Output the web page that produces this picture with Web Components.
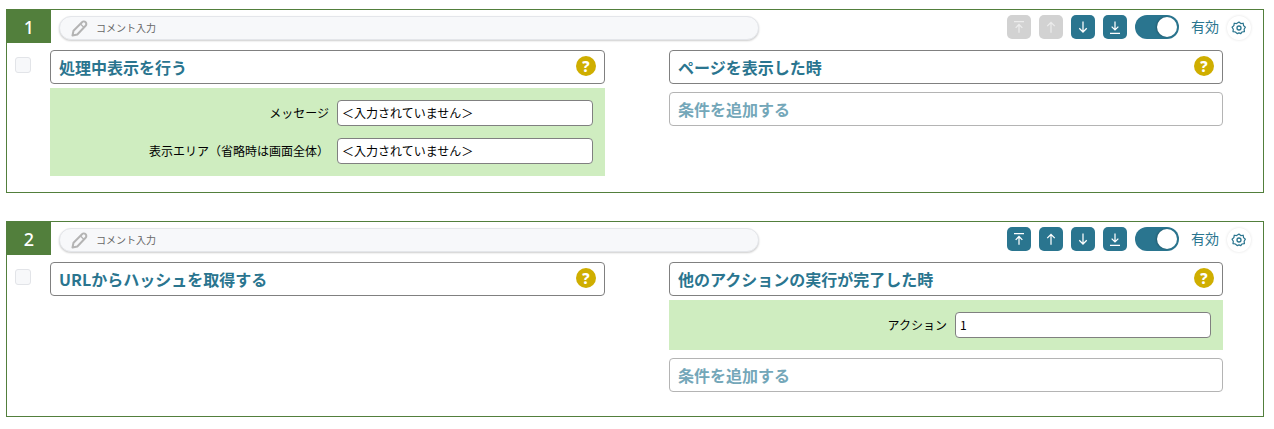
<!DOCTYPE html>
<html lang="ja">
<head>
<meta charset="utf-8">
<title>アクション</title>
<style>
    html, body {
        margin: 0;
        background: #fff;
    }

    body {
        padding: 9px 10px 0 6px;
        font-family: "Noto Sans CJK JP", "Noto Sans", sans-serif;
    }
</style>
</head>
<body>

<action-card no="1" first-disabled>
    <title-box slot="left" help>処理中表示を行う</title-box>
    <param-panel slot="left">
        <param-row label="メッセージ" value="＜入力されていません＞"></param-row>
        <param-row label="表示エリア（省略時は画面全体）" value="＜入力されていません＞"></param-row>
    </param-panel>
    <title-box slot="right" help>ページを表示した時</title-box>
    <title-box slot="right" add>条件を追加する</title-box>
</action-card>

<action-card no="2" style="margin-top:28px">
    <title-box slot="left" help>URLからハッシュを取得する</title-box>
    <title-box slot="right" help>他のアクションの実行が完了した時</title-box>
    <param-panel slot="right">
        <param-row label="アクション" value="1"></param-row>
    </param-panel>
    <title-box slot="right" add>条件を追加する</title-box>
</action-card>

<script>
const ICONS = {
    top: '<path d="M6 5.500h12M12 19V9.500M8 13l4-4 4 4"/>',
    up: '<path d="M12 19V6.500M7.500 11L12 6.500l4.500 4.500"/>',
    down: '<path d="M12 5.500V18M7.500 13.500L12 18l4.500-4.500"/>',
    bottom: '<path d="M12 5.500V15M8 11.500l4 4 4-4M6 19.500h12"/>'
};

class MoveButton extends HTMLElement {
    connectedCallback() {
        let icon = ICONS[this.getAttribute('icon')];
        this.attachShadow({mode: 'open'}).innerHTML = `
<style>
    :host {
        display: flex;
        align-items: center;
        justify-content: center;
        width: 24px;
        height: 24px;
        border-radius: 5px;
        background: #2a758f;
    }

    :host([disabled]) {
        background: #d2d2d2;
    }

    svg {
        width: 20px;
        height: 20px;
        fill: none;
        stroke: #fff;
        stroke-width: 1.500;
    }

    :host([disabled]) svg {
        stroke: #ececec;
    }
</style>
<svg viewBox="0 0 24 24">${icon}</svg>
        `;
    }
}
customElements.define('move-button', MoveButton);

class OnToggle extends HTMLElement {
    connectedCallback() {
        this.attachShadow({mode: 'open'}).innerHTML = `
<style>
    :host {
        display: flex;
        justify-content: flex-end;
        align-items: center;
        box-sizing: border-box;
        width: 44px;
        height: 24px;
        padding-right: 2px;
        border-radius: 12px;
        background: #2a758f;
    }

    i {
        width: 20px;
        height: 20px;
        border-radius: 50%;
        background: #fff;
        box-shadow: -1px 0 2px rgba(0, 0, 0, .25);
    }
</style>
<i></i>
        `;
    }
}
customElements.define('on-toggle', OnToggle);

class GearButton extends HTMLElement {
    connectedCallback() {
        this.attachShadow({mode: 'open'}).innerHTML = `
<style>
    :host {
        display: flex;
        align-items: center;
        justify-content: center;
        width: 24px;
        height: 24px;
        margin-top: 2px;
        border-radius: 50%;
        background: #fff;
        box-shadow: 0 0 3px rgba(0, 0, 0, .12);
    }

    svg {
        width: 16px;
        height: 16px;
        fill: none;
        stroke: #2a758f;
        stroke-width: 1.300;
    }
</style>
<svg viewBox="0 0 16 16">
    <circle cx="8" cy="8" r="2"/>
    <path d="M8 1.800l1.900 1.600 2.500-.3.400 2.500 1.900 1.700-1.300 2.100.3 2.500-2.500.4L9.900 14 8 13.200 6.100 14l-1.900-1.700-2.500-.4.300-2.500L.7 7.300l1.900-1.700.4-2.500 2.500.3z" transform="translate(.4 .3) scale(.95)" stroke-linejoin="round"/>
</svg>
        `;
    }
}
customElements.define('gear-button', GearButton);

class CommentPill extends HTMLElement {
    connectedCallback() {
        this.attachShadow({mode: 'open'}).innerHTML = `
<style>
    :host {
        display: flex;
        align-items: center;
        box-sizing: border-box;
        width: 700px;
        height: 24px;
        margin-top: 6px;
        padding-left: 11px;
        border: 1px solid #e4e6ea;
        border-radius: 12px;
        background: #f7f8fa;
        box-shadow: 0 1px 2px rgba(0, 0, 0, .2);
        color: #666;
        font-size: 10px;
    }

    span {
        margin-top: -1px;
    }

    svg {
        width: 17px;
        height: 17px;
        margin-right: 8px;
        fill: none;
        stroke: #b4b4b4;
        stroke-width: 2;
        stroke-linejoin: round;
    }
</style>
<svg viewBox="0 0 17 17">
    <path d="M1.500 15.500l1-4.800L11 2.200c1-1 2.700-.9 3.600 0s1 2.600 0 3.600L6.300 14.500z"/>
    <path d="M9.500 4l3.500 3.500" stroke-width="1.200"/>
</svg>
<span>コメント入力</span>
        `;
    }
}
customElements.define('comment-pill', CommentPill);

class TitleBox extends HTMLElement {
    connectedCallback() {
        this.attachShadow({mode: 'open'}).innerHTML = `
<style>
    :host {
        display: flex;
        align-items: center;
        justify-content: space-between;
        box-sizing: border-box;
        height: 34px;
        padding: 0 8px;
        border: 1px solid #808080;
        border-radius: 4px;
        background: #fff;
        color: #2a758f;
        font-size: 16px;
        font-weight: 700;
    }

    :host([add]) {
        margin: 4px 0 8px;
        border-color: #b4b4b4;
        color: #74a7b9;
    }

    b {
        display: none;
        width: 20px;
        height: 20px;
        margin: -3px 0 0;
        border-radius: 50%;
        background: #cfae00;
        color: #fff;
        font: 800 15px/20px "Noto Sans", sans-serif;
        text-align: center;
    }

    :host([help]) b {
        display: block;
    }
</style>
<span><slot></slot></span>
<b>?</b>
        `;
    }
}
customElements.define('title-box', TitleBox);

class ParamPanel extends HTMLElement {
    connectedCallback() {
        this.attachShadow({mode: 'open'}).innerHTML = `
<style>
    :host {
        display: flex;
        flex-direction: column;
        gap: 12px;
        padding: 12px;
        background: #cfedc0;
    }
</style>
<slot></slot>
        `;
    }
}
customElements.define('param-panel', ParamPanel);

class ParamRow extends HTMLElement {
    connectedCallback() {
        this.attachShadow({mode: 'open'}).innerHTML = `
<style>
    :host {
        display: flex;
        align-items: center;
        justify-content: flex-end;
        gap: 8px;
        color: #000;
        font-size: 12px;
    }

    span {
        margin-top: -2px;
    }

    div {
        box-sizing: border-box;
        width: 256px;
        height: 26px;
        padding-left: 4px;
        border: 1px solid #808080;
        border-radius: 4px;
        background: #fff;
        font-size: 12px;
        line-height: 24px;
    }
</style>
<span></span>
<div></div>
        `;
        this.shadowRoot.querySelector('span').textContent = this.getAttribute('label');
        this.shadowRoot.querySelector('div').textContent = this.getAttribute('value');
    }
}
customElements.define('param-row', ParamRow);

class ActionCard extends HTMLElement {
    connectedCallback() {
        let off = this.hasAttribute('first-disabled') ? 'disabled' : '';
        this.attachShadow({mode: 'open'}).innerHTML = `
<style>
    :host {
        display: block;
        box-sizing: border-box;
        border: 1px solid #527f3c;
        padding-bottom: 16px;
    }

    header {
        display: flex;
        align-items: flex-start;
        height: 33px;
    }

    .no {
        align-self: stretch;
        width: 44px;
        margin-right: 8px;
        background: #527f3c;
        color: #fff;
        font: 500 18px/35px "Noto Sans", sans-serif;
        text-align: center;
    }

    .tools {
        display: flex;
        align-items: center;
        gap: 8px;
        margin: 4px 12px 0 auto;
    }

    .label {
        margin: -3px 0 0 4px;
        color: #2a758f;
        font-size: 14px;
        line-height: 24px;
    }

    .body {
        display: flex;
        margin-top: 7px;
    }

    .check {
        box-sizing: border-box;
        width: 16px;
        height: 16px;
        margin: 7px 0 0 8px;
        border: 1px solid #e2e4e8;
        border-radius: 3px;
        background: #f7f8fa;
    }

    .col {
        display: flex;
        flex-direction: column;
        gap: 4px;
    }

    .left {
        width: 555px;
        margin-left: 19px;
    }

    .right {
        width: 554px;
        margin-left: 64px;
    }
</style>
<header>
    <div class="no">${this.getAttribute('no')}</div>
    <comment-pill></comment-pill>
    <div class="tools">
        <move-button icon="top" ${off}></move-button>
        <move-button icon="up" ${off}></move-button>
        <move-button icon="down"></move-button>
        <move-button icon="bottom"></move-button>
        <on-toggle></on-toggle>
        <span class="label">有効</span>
        <gear-button></gear-button>
    </div>
</header>
<div class="body">
    <div class="check"></div>
    <div class="col left"><slot name="left"></slot></div>
    <div class="col right"><slot name="right"></slot></div>
</div>
        `;
    }
}
customElements.define('action-card', ActionCard);
</script>
</body>
</html>
